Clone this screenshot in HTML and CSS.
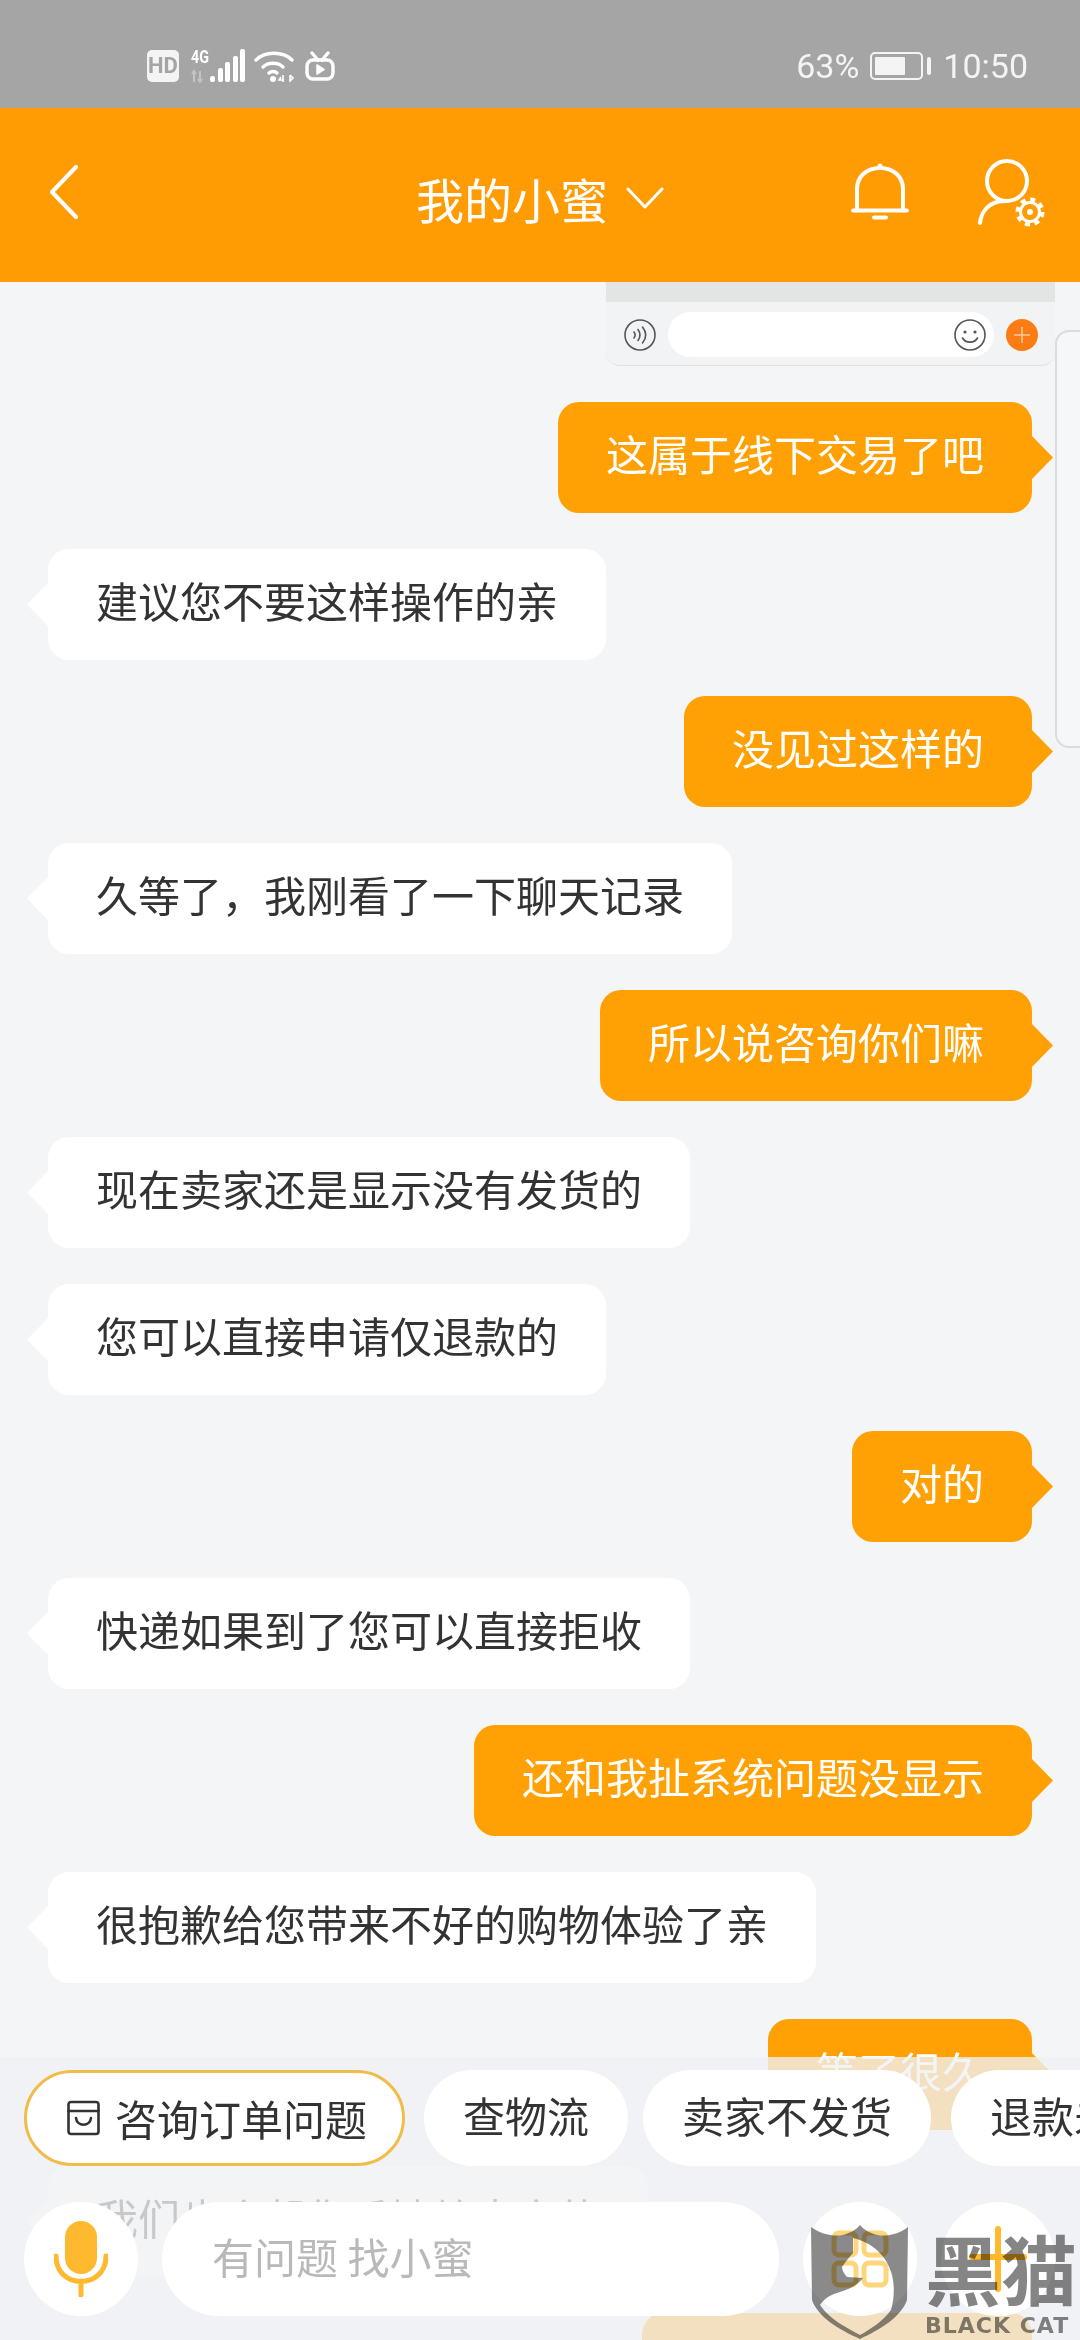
FILE: index.html

```html
<!DOCTYPE html>
<html lang="zh-CN">
<head>
  <meta charset="UTF-8">
  <title>我的小蜜</title>
  <meta name="viewport" content="width=device-width, initial-scale=1.0">
  <link rel="stylesheet" href="styles.css">
</head>
<body>
  <div class="app">
    <div class="status-bar">
      <div class="status-left">
        <span class="hd">HD</span>
        <svg class="sig" width="54" height="34" viewBox="0 0 54 34">
          <text x="0" y="14" class="sig-text" textLength="18" lengthAdjust="spacingAndGlyphs">4G</text>
          <path d="M3 22v11M1 25l2-3 2 3M9 33V22M7 30l2 3 2-3" fill="none" stroke="#c4c4c4" stroke-width="2"/>
          <rect x="19" y="27" width="5" height="6" rx="2" fill="#fff"/>
          <rect x="27" y="19" width="5" height="14" rx="2" fill="#fff"/>
          <rect x="34" y="13" width="5" height="20" rx="2" fill="#fff"/>
          <rect x="42" y="7" width="5" height="26" rx="2" fill="#fff"/>
          <rect x="49" y="0" width="5" height="33" rx="2" fill="#fff"/>
        </svg>
        <svg class="wifi" width="40" height="34" viewBox="0 0 40 34" fill="none" stroke="#fff" stroke-width="3.4" stroke-linecap="round">
          <path d="M2 11C11 2 29 2 38 11"/>
          <path d="M9 18C14 13 24 13 29 18"/>
          <path d="M15 24C17 22 21 22 23 24"/>
          <circle cx="19" cy="30" r="3" fill="#fff" stroke="none"/>
          <path d="M29 26v7M27 28l-2 3h5M36 26v7M36 26l3 3-3 3" stroke-width="1.6" stroke-linecap="butt"/>
        </svg>
        <svg class="tv" width="30" height="30" viewBox="0 0 30 30" fill="none" stroke="#fff" stroke-width="3.4" stroke-linecap="round" stroke-linejoin="round">
          <path d="M7 2l6 7M23 2l-6 7"/>
          <rect x="2" y="9" width="26" height="19" rx="6"/>
          <path d="M12 14l7 4.500-7 4.500z" fill="#fff" stroke-width="1.500"/>
        </svg>
      </div>
      <div class="status-right">
        <span>63%</span>
        <span class="battery"><span class="battery-fill"></span></span>
        <span class="battery-nub"></span>
        <span class="time">10:50</span>
      </div>
    </div>

    <header class="top-bar">
      <div class="top-left">
        <svg width="30" height="54" viewBox="0 0 30 54" fill="none" stroke="#fff" stroke-width="4" stroke-linecap="round" stroke-linejoin="round">
          <path d="M27 2L3 27l24 25"/>
        </svg>
      </div>
      <div class="title">
        <span>我的小蜜</span>
        <svg width="38" height="22" viewBox="0 0 38 22" fill="none" stroke="#fff" stroke-width="3" stroke-linecap="round" stroke-linejoin="round">
          <path d="M2 2l17 18L36 2"/>
        </svg>
      </div>
      <div class="top-right">
        <svg width="60" height="60" viewBox="0 0 60 60" fill="none" stroke="#fff" stroke-width="4" stroke-linecap="round">
          <path d="M7 49V28C7 15 17 7 30 7c13 0 23 8 23 21v21"/>
          <path d="M3 49.500h54M24 56.500h12"/>
          <circle cx="30" cy="5" r="2.500" fill="#fff" stroke="none"/>
        </svg>
        <svg width="72" height="72" viewBox="0 0 72 72" fill="none" stroke="#fff" stroke-width="4" stroke-linecap="round">
          <circle cx="32" cy="26" r="20"/>
          <path d="M5 68c1-10 7-18 17-21 3-1 7-1 10-1"/>
          <circle cx="55" cy="57" r="9.500" stroke-width="3"/>
          <circle cx="55" cy="57" r="12.500" stroke-width="4" stroke-dasharray="5 4.800" stroke-linecap="butt"/>
          <circle cx="55" cy="57" r="3" fill="#fff" stroke="none"/>
        </svg>
      </div>
    </header>

    <main class="chat">
      <div class="shot">
        <div class="shot-strip"></div>
        <div class="shot-bar">
          <svg width="32" height="32" viewBox="0 0 32 32" fill="none" stroke="#555" stroke-width="1.600" stroke-linecap="round">
            <circle cx="16" cy="16" r="15"/>
            <path d="M10 13c1.500 2 1.500 4 0 6M14 10.500c2.500 3.500 2.500 7.500 0 11M18.500 8c4 5 4 11 0 16"/>
          </svg>
          <div class="shot-input">
            <svg width="32" height="32" viewBox="0 0 32 32" fill="none" stroke="#555" stroke-width="1.600" stroke-linecap="round">
              <circle cx="16" cy="16" r="15"/>
              <circle cx="11" cy="13" r="1.600" fill="#555" stroke="none"/>
              <circle cx="21" cy="13" r="1.600" fill="#555" stroke="none"/>
              <path d="M8.500 19c3 5.500 12 5.500 15 0"/>
            </svg>
          </div>
          <span class="shot-plus">
            <svg width="20" height="20" viewBox="0 0 20 20" stroke="#ffc9a0" stroke-width="1.600"><path d="M10 2v16M2 10h16"/></svg>
          </span>
        </div>
      </div>

      <div class="msg me">这属于线下交易了吧</div>
      <div class="msg them">建议您不要这样操作的亲</div>
      <div class="msg me">没见过这样的</div>
      <div class="msg them">久等了，我刚看了一下聊天记录</div>
      <div class="msg me">所以说咨询你们嘛</div>
      <div class="msg them">现在卖家还是显示没有发货的</div>
      <div class="msg them">您可以直接申请仅退款的</div>
      <div class="msg me">对的</div>
      <div class="msg them">快递如果到了您可以直接拒收</div>
      <div class="msg me">还和我扯系统问题没显示</div>
      <div class="msg them">很抱歉给您带来不好的购物体验了亲</div>
      <div class="msg me">等了很久</div>
      <div class="msg them">我们也会帮您反馈给卖家的</div>
      <div class="msg me">这样太不负责了</div>

      <div class="side-panel"></div>
    </main>

    <div class="dock">
      <div class="chips">
        <div class="chip chip-on">
          <svg width="33" height="36" viewBox="0 0 33 36" fill="none" stroke="#333" stroke-width="2.600" stroke-linecap="round">
            <rect x="1.500" y="2" width="30" height="32" rx="2.500"/>
            <path d="M1.500 11h30M9 18c1 9 14 9 15 0"/>
          </svg>
          <span>咨询订单问题</span>
        </div>
        <div class="chip">查物流</div>
        <div class="chip">卖家不发货</div>
        <div class="chip chip-last">退款未到账</div>
      </div>
      <div class="input-row">
        <div class="round">
          <svg width="54" height="76" viewBox="0 0 54 76" fill="none">
            <rect x="11" y="0" width="32" height="53" rx="16" fill="#ffb92e"/>
            <path d="M2 35c0 34 50 34 50 0M27 60v14" stroke="#ffb92e" stroke-width="5" stroke-linecap="round"/>
          </svg>
        </div>
        <div class="ask">有问题 找小蜜</div>
        <div class="round">
          <svg width="58" height="58" viewBox="0 0 58 58" fill="none" stroke="#fdd57a" stroke-width="5">
            <rect x="3" y="3" width="22" height="22" rx="5"/>
            <rect x="33" y="3" width="22" height="22" rx="5"/>
            <rect x="3" y="33" width="22" height="22" rx="5"/>
            <rect x="33" y="33" width="22" height="22" rx="5"/>
          </svg>
        </div>
        <div class="round">
          <svg width="58" height="66" viewBox="0 0 58 66" fill="none" stroke="#ffb92e" stroke-width="6" stroke-linecap="round">
            <path d="M29 3v60M3 31h52"/>
          </svg>
        </div>
      </div>
    </div>

    <div class="watermark">
      <svg class="wm-shield" width="97" height="114" viewBox="0 0 97 114">
        <path d="M0 2C10 9 22 12 32 10 39 8 45 5 49 0c4 5 10 8 17 10 10 2 22-1 31-8l-1 73C90 92 70 104 49 114 27 104 7 92 1 75z" fill="#8a8a8a"/>
        <path d="M42 13C60 17 76 30 81 50c3 12 2 25-1 35C72 96 60 104 49 110 36 103 18 94 9 80c4-6 10-10 17-12 10-3 20-7 26-15l-16-1c-3-3-5-7-5-10 3-5 7-9 11-14z" fill="#fff"/>
      </svg>
      <div class="wm-text">
        <div class="wm-cn">黑猫</div>
        <div class="wm-en">BLACK CAT</div>
      </div>
    </div>
  </div>
</body>
</html>
```

FILE: styles.css

```css
html, body {
  margin: 0;
  padding: 0;
  background: #f3f5f7;
}
.app {
  position: relative;
  width: 1080px;
  height: 2340px;
  overflow: hidden;
  background: #f3f5f7;
  font-family: "Noto Sans CJK SC", "Noto Sans", sans-serif;
  color: #333;
}

/* status bar */
.status-bar {
  height: 108px;
  background: #a5a5a5;
  display: flex;
  align-items: center;
  justify-content: space-between;
  padding: 24px 52px 0 147px;
  box-sizing: border-box;
  color: #f4f4f4;
  font-family: Roboto, sans-serif;
  font-size: 34px;
}
.status-left {
  display: flex;
  align-items: center;
  height: 34px;
}
.hd {
  width: 32px;
  height: 32px;
  background: #f4f4f4;
  border-radius: 5px;
  color: #a5a5a5;
  font-size: 22px;
  font-weight: 700;
  line-height: 32px;
  text-align: center;
}
.sig {
  margin-left: 12px;
}
.sig-text {
  font-family: Roboto, sans-serif;
  font-size: 18px;
  font-weight: 700;
  fill: #fff;
}
.wifi {
  margin-left: 9px;
}
.tv {
  margin-left: 11px;
}
.status-right {
  display: flex;
  align-items: center;
}
.battery {
  width: 53px;
  height: 28px;
  margin-left: 11px;
  border: 2px solid #f4f4f4;
  border-radius: 5px;
  box-sizing: border-box;
  padding: 3px;
  display: flex;
}
.battery-fill {
  width: 30px;
  background: #f4f4f4;
  border-radius: 1px;
}
.battery-nub {
  width: 4px;
  height: 18px;
  margin-left: 4px;
  background: #f4f4f4;
  border-radius: 2px;
}
.time {
  margin-left: 12px;
}

/* orange header */
.top-bar {
  height: 174px;
  background: #ff9c04;
  display: grid;
  grid-template-columns: 1fr auto 1fr;
  align-items: center;
  color: #fff;
}
.top-left {
  padding: 0 0 6px 49px;
  display: flex;
}
.title {
  display: flex;
  align-items: center;
  gap: 18px;
  font-size: 48px;
  padding-top: 6px;
}
.top-right {
  display: flex;
  justify-content: flex-end;
  align-items: center;
  gap: 65px;
  padding: 0 33px 8px 0;
}

/* messages */
.chat {
  display: flex;
  flex-direction: column;
  gap: 36px;
  padding: 0 48px;
}
.shot {
  align-self: flex-end;
  width: 449px;
  height: 84px;
  margin-right: -23px;
  background: #f2f3f4;
  border-bottom: 1px solid #dfe1e3;
  border-radius: 0 0 14px 14px;
  box-sizing: border-box;
}
.shot-strip {
  height: 20px;
  background: #e3e4e4;
}
.shot-bar {
  display: flex;
  align-items: center;
  gap: 12px;
  padding: 10px 17px 0 18px;
}
.shot-input {
  flex: 1;
  height: 45px;
  background: #fff;
  border-radius: 23px;
  display: flex;
  align-items: center;
  justify-content: flex-end;
  padding-right: 8px;
}
.shot-plus {
  width: 32px;
  height: 32px;
  border-radius: 50%;
  background: #fb7c12;
  display: flex;
  align-items: center;
  justify-content: center;
}
.msg {
  position: relative;
  font-size: 42px;
  line-height: 57px;
  padding: 22px 48px 32px;
  border-radius: 21px;
}
.msg::after {
  content: "";
  position: absolute;
  top: 33px;
  width: 22px;
  height: 45px;
}
.msg.me {
  align-self: flex-end;
  background: #ffa004;
  color: #fff;
}
.msg.me::after {
  right: -21px;
  background: #ffa004;
  clip-path: polygon(0 0, 100% 50%, 0 100%);
}
.msg.them {
  align-self: flex-start;
  background: #fff;
}
.msg.them::after {
  left: -21px;
  background: #fff;
  clip-path: polygon(100% 0, 0 50%, 100% 100%);
}
.side-panel {
  position: absolute;
  left: 1055px;
  top: 330px;
  width: 60px;
  height: 418px;
  background: #f6f7f9;
  border: 2px solid #d9dce0;
  border-radius: 14px;
  box-sizing: border-box;
}

/* bottom dock over the chat */
.dock {
  position: absolute;
  left: 0;
  right: 0;
  bottom: 0;
  height: 283px;
  background: rgba(240, 241, 243, .79);
  padding-top: 13px;
  box-sizing: border-box;
}
.chips {
  display: flex;
  gap: 15px;
  padding-left: 24px;
  white-space: nowrap;
}
.chip {
  flex: none;
  height: 96px;
  line-height: 90px;
  padding: 0 39px;
  font-size: 42px;
  background: #fff;
  border-radius: 48px;
  box-sizing: border-box;
}
.chip-on {
  display: flex;
  align-items: center;
  gap: 15px;
  margin-right: 4px;
  border: 3px solid #f0bc4a;
  line-height: 84px;
  padding: 0 35px 0 40px;
}
.chip-last {
  margin-left: 5px;
}
.input-row {
  display: flex;
  align-items: center;
  gap: 24px;
  margin-top: 36px;
  padding-left: 24px;
}
.round {
  width: 114px;
  height: 114px;
  flex: none;
  background: #fff;
  border-radius: 50%;
  display: flex;
  align-items: center;
  justify-content: center;
}
.ask {
  width: 617px;
  height: 114px;
  line-height: 108px;
  padding-left: 50px;
  box-sizing: border-box;
  background: #fff;
  border-radius: 57px;
  font-size: 42px;
  color: #b9b9b9;
}

/* watermark */
.watermark {
  position: absolute;
  left: 811px;
  top: 2225px;
  display: flex;
  gap: 17px;
  mix-blend-mode: multiply;
}
.wm-text {
  display: flex;
  flex-direction: column;
  align-items: flex-start;
  color: #858585;
}
.wm-cn {
  font-size: 76px;
  line-height: 84px;
  font-weight: 700;
}
.wm-en {
  font-family: "DejaVu Sans", sans-serif;
  font-size: 22px;
  line-height: 24px;
  font-weight: 700;
  white-space: nowrap;
  margin-top: 5px;
  letter-spacing: 1px;
}
```
